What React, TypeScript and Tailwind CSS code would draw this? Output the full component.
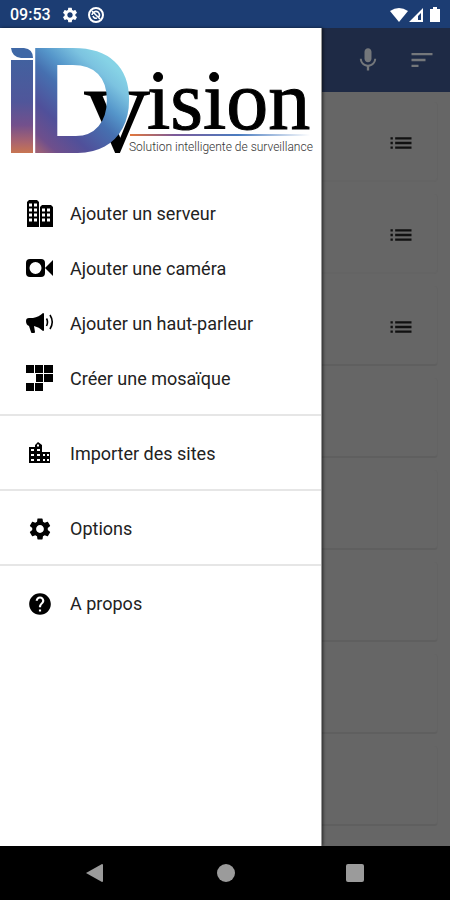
import type { ReactNode } from "react";
import { MdHelp, MdList, MdMic, MdSettings, MdSort } from "react-icons/md";

function Logo() {
  return (
    <svg
      viewBox="0 0 321 158"
      className="block w-full"
      role="img"
      aria-label="iD vision, Solution intelligente de surveillance"
    >
      <defs>
        <linearGradient id="stem" x1="0" y1="0" x2="0" y2="1">
          <stop offset="0" stopColor="#42619f" />
          <stop offset="0.45" stopColor="#50569a" />
          <stop offset="0.7" stopColor="#73508c" />
          <stop offset="0.88" stopColor="#a9646f" />
          <stop offset="1" stopColor="#c87552" />
        </linearGradient>
        <linearGradient id="bowl" gradientUnits="userSpaceOnUse" x1="118" y1="42" x2="42" y2="126">
          <stop offset="0" stopColor="#86d3e6" />
          <stop offset="0.12" stopColor="#7cc3e0" />
          <stop offset="0.3" stopColor="#5596ca" />
          <stop offset="0.45" stopColor="#4670b0" />
          <stop offset="0.7" stopColor="#50509a" />
          <stop offset="0.9" stopColor="#6f4f8c" />
          <stop offset="1" stopColor="#9a6078" />
        </linearGradient>
        <linearGradient id="rule" x1="0" y1="0" x2="1" y2="0">
          <stop offset="0" stopColor="#e2773c" />
          <stop offset="0.25" stopColor="#7b5a9a" />
          <stop offset="0.6" stopColor="#4a7cc0" />
          <stop offset="1" stopColor="#ffffff" />
        </linearGradient>
      </defs>
      <text x="84" y="124" fontSize="132" className="font-['Liberation_Serif',serif]">
        v
      </text>
      <path d="M11 20 H24 Q33 21 33 30 H21 Q12 29 11 20 Z" fill="#3f68a6" />
      <rect x="11" y="32" width="22" height="93" fill="url(#stem)" />
      <text
        x="25"
        y="125"
        fontSize="153"
        fill="url(#bowl)"
        className="font-['Liberation_Sans',sans-serif] font-bold"
      >
        D
      </text>
      <text
        x="147"
        y="101"
        fontSize="84"
        stroke="#000000"
        strokeWidth="1"
        className="font-['Liberation_Serif',serif]"
      >
        ision
      </text>
      <rect x="130" y="106" width="180" height="2" fill="url(#rule)" />
      <text x="129" y="123" fontSize="12" fill="#333333" className="font-[Roboto,sans-serif] font-light">
        Solution intelligente de surveillance
      </text>
    </svg>
  );
}

function ServerIcon() {
  return (
    <svg viewBox="0 0 28 28" className="size-7">
      <path d="M1 27V2L3 0H11L13 2V27Z M14 27V7L16 5H25L27 7V27Z" />
      <path
        d="M3 5H6M8 5H11M3 10H6M8 10H11M3 15H6M8 15H11M3 20H6M8 20H11M16 10H19M21 10H24M16 15H19M21 15H24M16 20H19M21 20H24"
        stroke="#fff"
        strokeWidth="3"
      />
    </svg>
  );
}

function CameraIcon() {
  return (
    <svg viewBox="0 0 28 28" className="size-7">
      <path
        fillRule="evenodd"
        d="M4 4H15Q19 4 19 8V18Q19 22 15 22H4Q0 22 0 18V8Q0 4 4 4ZM9.500 7A6 6 0 1 0 9.500 19A6 6 0 1 0 9.500 7Z"
      />
      <path d="M19 13L27 5V21Z" />
    </svg>
  );
}

function SpeakerIcon() {
  return (
    <svg viewBox="0 0 28 28" className="size-7">
      <path d="M0 11Q0 8 3 8H7Q13 7 17 3Q18 3 18 4V20Q18 21 17 21Q13 17 8 16L9 22Q9 23 8 23H6Q5 23 5 22L3 16Q0 15 0 11Z" />
      <path
        d="M20.500 8.500Q22.500 12 20.500 16M24 5Q28.500 12 24 19"
        fill="none"
        stroke="currentColor"
        strokeWidth="1.600"
      />
    </svg>
  );
}

function MosaicIcon() {
  return (
    <svg viewBox="0 0 28 28" className="size-7">
      <path d="M0 0H8V8H0Z M9 0H17V8H9Z M18 0H27V8H18Z M10 9H17V17H10Z M18 9H27V17H18Z M0 18H8V26H0Z M9 18H17V26H9Z" />
    </svg>
  );
}

function SitesIcon() {
  return (
    <svg viewBox="0 0 28 28" className="size-7">
      <path d="M3 23V7H9V5L12 2L16 5V12H24V23Z" />
      <path
        d="M5 10H8M5 15H8M5 20H8M11 10H14M11 15H14M11 20H14M17 15H19M17 20H19M21 15H23M21 20H23M11 5.500H13"
        stroke="#fff"
        strokeWidth="2"
      />
    </svg>
  );
}

function MenuItem({ icon, label }: { icon: ReactNode; label: string }) {
  return (
    <li>
      <button type="button" className="flex h-[55px] w-full items-center gap-4 pl-[26px] text-left">
        <span className="flex w-7 shrink-0 justify-center text-black">{icon}</span>
        <span>{label}</span>
      </button>
    </li>
  );
}

function Divider() {
  return <li role="separator" className="mt-2 mb-2.5 h-0.5 bg-[#e6e6e6]" />;
}

function StatusBar() {
  return (
    <header className="flex h-7 shrink-0 items-center bg-[#1c3d73] pt-0.5 pr-2 pl-2.5 text-white">
      <span className="w-[51px] text-base font-medium">09:53</span>
      <MdSettings className="size-[18px]" />
      <svg viewBox="0 0 18 18" className="ml-2 size-[18px]" fill="none" stroke="currentColor">
        <circle cx="9" cy="9" r="7" strokeWidth="2" />
        <path d="M5 9A4 4 0 0 1 11 6Q14 9 11 12M5 5L13 13M6 10Q7 13 10 12" strokeWidth="1.600" />
      </svg>
      <svg viewBox="0 0 52 18" className="ml-auto h-[18px] w-[52px]" fill="currentColor">
        <path d="M0 5Q9 -1 18 5L9 16Z" />
        <path fillRule="evenodd" d="M19 16L33 2V16ZM28 14H31V7L28 10Z" />
        <path d="M43 1H47V3H50V16H40V3H43Z" />
      </svg>
    </header>
  );
}

export default function App() {
  const cards = [true, true, true, false, false, false, false, false];
  return (
    <div className="flex min-h-screen flex-col bg-black font-[Roboto,sans-serif]">
      <StatusBar />
      <main className="relative flex grow flex-col bg-[#666666]">
        <div className="flex h-16 shrink-0 items-center justify-end gap-[26px] bg-[#1e2a45] pr-3.5 text-[#74777b]">
          <button type="button" aria-label="Recherche vocale">
            <MdMic className="size-7" />
          </button>
          <button type="button" aria-label="Trier">
            <MdSort className="size-7" />
          </button>
        </div>
        <ul className="flex flex-col gap-3 py-2.5 pr-3 pl-3">
          {cards.map((filled, index) => (
            <li
              key={index}
              className={`flex h-20 items-center justify-end rounded-sm border-r border-b-2 border-r-[#636363] pt-1 pr-[22px] text-[#111111] ${
                index < 2 ? "border-b-[#646464]" : "border-b-[#5f5f5f]"
              }`}
            >
              {filled && (
                <button type="button" aria-label="Afficher la liste">
                  <MdList className="size-7" />
                </button>
              )}
            </li>
          ))}
        </ul>
        <nav className="absolute inset-y-0 left-0 w-[322px] border-r border-[#999999] bg-white shadow-[1px_0_3px_rgba(0,0,0,0.6)]">
          <Logo />
          <ul className="text-lg text-[#222222]">
            <MenuItem icon={<ServerIcon />} label="Ajouter un serveur" />
            <MenuItem icon={<CameraIcon />} label="Ajouter une caméra" />
            <MenuItem icon={<SpeakerIcon />} label="Ajouter un haut-parleur" />
            <MenuItem icon={<MosaicIcon />} label="Créer une mosaïque" />
            <Divider />
            <MenuItem icon={<SitesIcon />} label="Importer des sites" />
            <Divider />
            <MenuItem icon={<MdSettings className="size-[26px]" />} label="Options" />
            <Divider />
            <MenuItem icon={<MdHelp className="size-[26px]" />} label="A propos" />
          </ul>
        </nav>
      </main>
      <footer className="flex h-[54px] shrink-0 items-center justify-around px-[30px] text-[#9b9b9b]">
        <button type="button" aria-label="Retour">
          <svg viewBox="0 0 20 20" className="size-5" fill="currentColor">
            <path d="M0 10L16 1Q17 1 17 2V18Q17 19 16 19Z" />
          </svg>
        </button>
        <button type="button" aria-label="Accueil" className="size-[18px] rounded-full bg-[#9b9b9b]" />
        <button type="button" aria-label="Applications récentes" className="size-[18px] rounded-xs bg-[#9b9b9b]" />
      </footer>
    </div>
  );
}
